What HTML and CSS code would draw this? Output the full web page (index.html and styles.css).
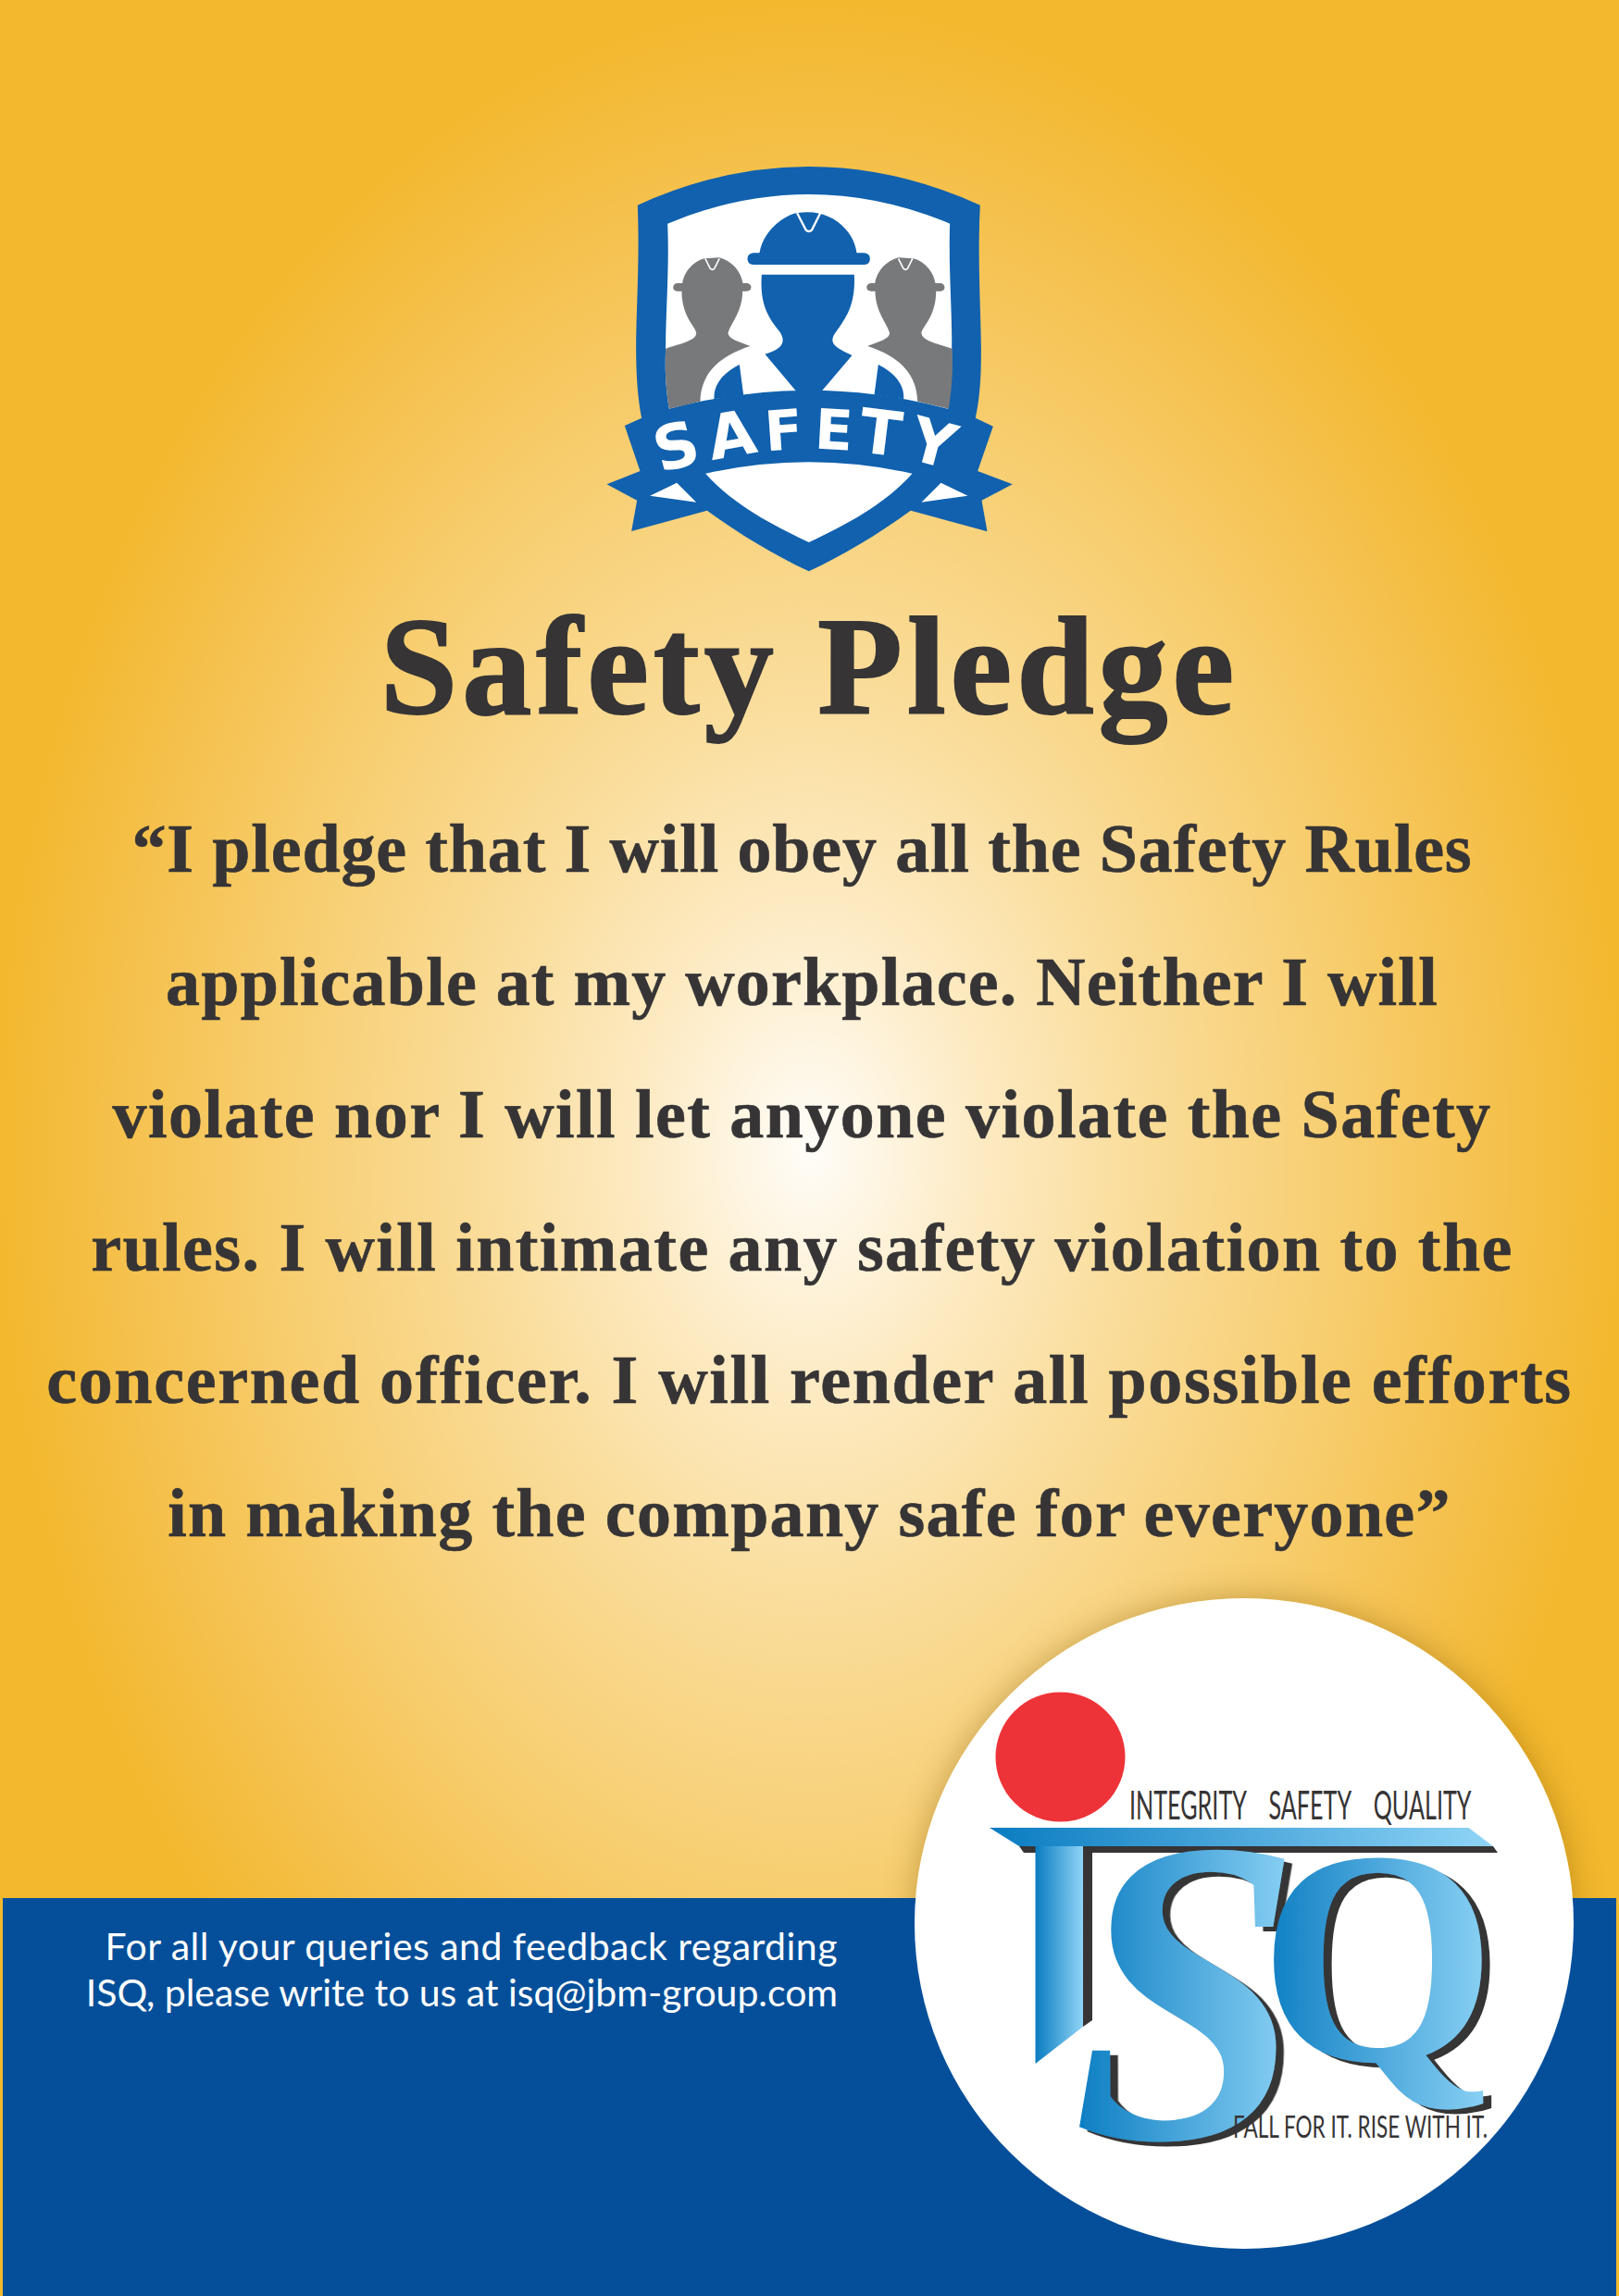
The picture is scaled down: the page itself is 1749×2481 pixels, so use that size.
FILE: index.html
```html
<!DOCTYPE html>
<html lang="en">
<head>
    <meta charset="UTF-8">
    <meta name="viewport" content="width=device-width, initial-scale=1.0">
    <title>Safety Pledge</title>
    <link rel="stylesheet" href="styles.css">
</head>
<body>

<div class="poster">
    <div class="top">
        <svg class="badge" viewBox="13.5 0 1500 1470" role="img" aria-label="Safety badge">
            <path class="b-blue" d="M205 215 Q480 90 760 90 Q1040 90 1315 215 C1305 400 1320 600 1318 700 C1318 800 1310 860 1300 905 L1357 932 L1307 1077 L1420 1120 L1320 1172 L1338 1273 L1090 1205 C980 1285 870 1350 760 1402 C650 1350 540 1285 430 1205 L185 1272 L203 1172 L105 1120 L213 1077 L163 930 L218 905 C205 840 200 760 200 680 C200 560 212 400 205 215 Z"/>
            <path class="b-white" d="M302 275 Q530 180 760 180 Q990 180 1217 275 C1212 420 1225 560 1223 680 C1225 760 1220 820 1210 875 Q760 755 307 875 C295 800 293 740 296 680 C296 560 308 420 302 275 Z"/>
            <g id="sideMan">
                <path class="b-gray" d="M296 680 C340 665 395 655 395 630 C395 610 350 580 348 500 L348 494 L332 494 Q320 492 320 481 Q322 468 335 468 L350 468 C358 420 400 390 425 388 L470 385 C510 395 540 430 546 468 L560 468 Q572 470 573 481 Q572 494 558 494 L545 494 C545 560 505 600 498 630 C500 650 540 660 570 672 C500 695 410 740 408 851 L307 875 C295 800 293 740 296 680 Z"/>
                <path class="b-notch thin" d="M424 388 L440 420 Q447 428 454 420 L470 388"/>
                <path class="b-blue" d="M535 732 L548 830 L453 844 C450 790 490 755 535 732 Z"/>
            </g>
            <use href="#sideMan" transform="translate(1520 0) scale(-1 1)"/>
            <path class="b-blue" d="M600 370 C610 300 680 245 725 240 Q760 235 795 242 C850 255 905 300 915 370 L940 370 Q958 372 958 389 Q958 406 940 408 L580 408 Q561 406 561 389 Q561 372 580 370 Z"/>
            <path class="b-notch" d="M722 241 L750 295 Q760 305 770 295 L797 241"/>
            <path class="b-blue" d="M607 440 L907 440 C912 540 880 580 845 630 C825 660 840 675 900 702 L800 820 L800 840 L720 840 L720 820 L618 698 C680 680 685 655 665 625 C630 580 600 540 607 440 Z"/>
            <path class="b-white" d="M425 1085 Q760 1011 1095 1085 C1000 1190 880 1250 760 1308 C640 1250 520 1190 425 1085 Z"/>
            <path class="b-white" d="M245 1157 L332 1115 L395 1178 Z"/>
            <path class="b-white" d="M1275 1157 L1188 1115 L1125 1178 Z"/>
            <text class="b-word" transform="translate(348 1064) rotate(-15)">S</text>
            <text class="b-word" transform="translate(522 1028) rotate(-10)">A</text>
            <text class="b-word b-word-mid" transform="translate(682 1008) rotate(-4)">F</text>
            <text class="b-word b-word-mid" transform="translate(838 1007) rotate(3)">E</text>
            <text class="b-word" transform="translate(984 1022) rotate(7)">T</text>
            <text class="b-word" transform="translate(1145 1054) rotate(15)">Y</text>
        </svg>

        <h1 class="title">Safety Pledge</h1>

        <div class="pledge">
            <div class="pledge-line">“I pledge that I will obey all the Safety Rules</div>
            <div class="pledge-line">applicable at my workplace. Neither I will</div>
            <div class="pledge-line">violate nor I will let anyone violate the Safety</div>
            <div class="pledge-line">rules. I will intimate any safety violation to the</div>
            <div class="pledge-line">concerned officer. I will render all possible efforts</div>
            <div class="pledge-line">in making the company safe for everyone”</div>
        </div>
    </div>

    <div class="footer">
        <p class="contact">
            <span class="contact-line">For all your queries and feedback regarding</span>
            <span class="contact-line">ISQ, please write to us at isq@jbm-group.com</span>
        </p>
    </div>

    <div class="seal-glow"></div>
    <div class="seal">
        <svg class="seal-art" viewBox="988 1727 712 703" role="img" aria-label="ISQ logo">
            <defs>
                <linearGradient id="barFill" x1="0" x2="1" y1="0" y2="0">
                    <stop offset="0" stop-color="#0a7cc1"/>
                    <stop offset="1" stop-color="#8fd4f6"/>
                </linearGradient>
                <filter id="hardShadow" x="-10%" y="-10%" width="125%" height="125%">
                    <feDropShadow dx="9" dy="5" stdDeviation="0" flood-color="#363435"/>
                </filter>
            </defs>
            <circle cx="1145.5" cy="1898.5" r="70" fill="#ee3338"/>
            <text class="isq-tag isq-tag-wide" transform="translate(1220 1966) scale(0.585 1)" font-size="43">INTEGRITY  SAFETY  QUALITY</text>
            <polygon class="isq-dark" points="1101,1995 1613,1995 1618,2002 1106,2002"/>
            <polygon class="isq-dark" points="1170,2002 1180,2002 1180,2183 1170,2190"/>
            <polygon fill="url(#barFill)" points="1118.5,1995 1170,1995 1170,2190 1118.5,2230"/>
            <text class="isq-big isq-s" transform="translate(1158 2310) scale(0.95 1)" font-size="470" fill="url(#barFill)" filter="url(#hardShadow)">S</text>
            <text class="isq-big" x="1360" y="2226" font-size="330" fill="url(#barFill)" filter="url(#hardShadow)">Q</text>
            <polygon fill="url(#barFill)" points="1069,1975 1586.5,1975 1613,1995 1101,1995"/>
            <text class="isq-tag" transform="translate(1332 2310) scale(0.683 1)" font-size="33">FALL FOR IT. RISE WITH IT.</text>
        </svg>
    </div>
</div>

</body>
</html>
```

FILE: styles.css
```css
html, body {
    margin: 0;
    padding: 0;
}
.poster {
    position: relative;
    width: 1749px;
    height: 2481px;
    overflow: hidden;
    display: flex;
    flex-direction: column;
    background: radial-gradient(ellipse 880px 1240px at 875px 1240px, #fffdf9 0%, #fef6e4 8%, #fdebc5 20%, #fadd9b 40%, #f7cd6e 66%, #f5c04a 86%, #f3b82e 100%);
    background-color: #f3b82e;
}
.top {
    height: 2051px;
    padding-top: 150px;
    box-sizing: border-box;
}
.badge {
    display: block;
    width: 500px;
    height: 490px;
    margin: 0 auto;
}
.b-blue { fill: #1161ae; }
.b-white { fill: #ffffff; }
.b-gray { fill: #77797b; }
.b-notch {
    fill: none;
    stroke: #ffffff;
    stroke-width: 7;
}
.b-notch.thin { stroke-width: 5; }
.b-word {
    font-family: "DejaVu Sans", sans-serif;
    font-weight: bold;
    font-size: 200px;
    fill: #ffffff;
    text-anchor: middle;
}
.b-word-mid { font-size: 180px; }
.title {
    margin: 0;
    height: 160px;
    line-height: 160px;
    text-align: center;
    font-family: "Liberation Serif", serif;
    font-weight: bold;
    font-size: 150px;
    letter-spacing: 5px;
    -webkit-text-stroke: 2px #363435;
    color: #363435;
}
.pledge {
    margin-top: 46px;
    text-align: center;
    font-family: "Liberation Serif", serif;
    font-weight: bold;
    font-size: 74px;
    line-height: 143.6px;
    -webkit-text-stroke: 0.6px #363435;
    color: #363435;
}
.pledge-line:nth-child(-n+4) { padding-right: 16px; }
.pledge-line:nth-child(1) { letter-spacing: 0.85px; }
.pledge-line:nth-child(2) { letter-spacing: 1.2px; }
.pledge-line:nth-child(3) { letter-spacing: 1.44px; }
.pledge-line:nth-child(4) { letter-spacing: 1.42px; }
.pledge-line:nth-child(5) { letter-spacing: 1.66px; }
.pledge-line:nth-child(6) { letter-spacing: 1.3px; }
.footer {
    position: relative;
    z-index: 1;
    flex: 1;
    margin: 0 3px;
    background: #054f9a;
}
.contact {
    margin: 27px 0 0;
    width: 902px;
    text-align: right;
    font-family: "Lato", sans-serif;
    font-size: 41px;
    line-height: 50px;
    color: #ffffff;
}
.contact-line { display: block; }
.contact-line:nth-child(1) { letter-spacing: 0.47px; }
.contact-line:nth-child(2) { letter-spacing: -0.05px; }
.seal-glow {
    position: absolute;
    left: 988px;
    top: 1727px;
    width: 712px;
    height: 703px;
    border-radius: 50%;
    box-shadow: 0 0 34px rgba(120, 80, 0, 0.4);
}
.seal {
    position: absolute;
    z-index: 2;
    left: 988px;
    top: 1727px;
    width: 712px;
    height: 703px;
    border-radius: 50%;
    background: #ffffff;
}
.seal-art {
    display: block;
    width: 712px;
    height: 703px;
    overflow: visible;
}
.isq-tag {
    font-family: "Lato", sans-serif;
    fill: #363435;
    white-space: pre;
}
.isq-tag-wide { word-spacing: 10px; }
.isq-big {
    font-family: "Liberation Serif", serif;
    font-weight: bold;
}
.isq-s { font-style: italic; }
.isq-dark { fill: #363435; }
```
